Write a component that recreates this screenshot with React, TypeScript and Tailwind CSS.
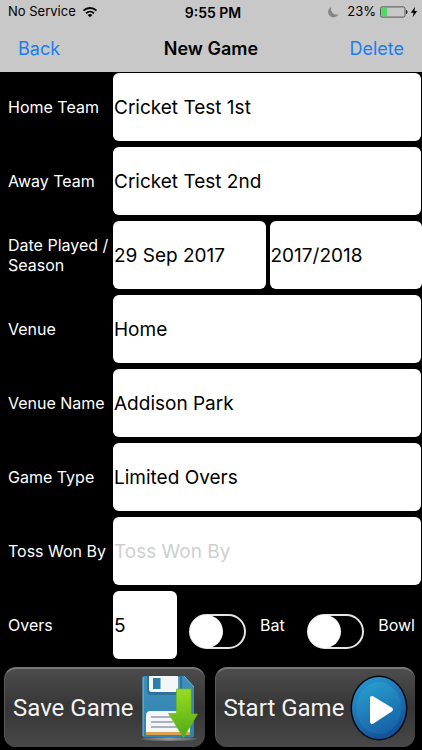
import { ReactNode, useState } from "react";

const inputClass =
  "h-[68px] w-full min-w-0 rounded-md bg-white pl-px text-[19px] text-black outline-none placeholder:text-[#cfcfcf]";

function StatusBar() {
  return (
    <div className="grid h-6 grid-cols-[1fr_auto_1fr] items-center pr-1 pl-2 text-[13px]">
      <div className="flex items-center gap-1.5">
        <span>No Service</span>
        <svg viewBox="0 0 16 12" className="h-3 w-4" fill="none" stroke="currentColor" strokeWidth="1.8">
          <path d="M1.5 4.6C5.2 1.1 10.8 1.1 14.5 4.6" />
          <path d="M4 7.3C6.3 5.1 9.7 5.1 12 7.3" />
          <path d="M8 11.3L5.6 8.9C7 7.7 9 7.7 10.4 8.9Z" fill="currentColor" stroke="none" />
        </svg>
      </div>
      <span className="text-[14px] font-semibold">9:55 PM</span>
      <div className="flex items-center justify-end">
        <svg viewBox="0 0 12 12" className="mr-2 h-3 w-3" fill="#858585">
          <path d="M4 1A5.500 5.500 0 1 0 11.500 8.300C7.500 9.500 3.300 6.200 4 1Z" />
        </svg>
        <span className="mr-1">23%</span>
        <svg viewBox="0 0 28 12" className="h-3 w-7">
          <rect x="0.5" y="0.9" width="24.5" height="10.2" rx="1.6" fill="none" stroke="#555" />
          <rect x="1.3" y="1.7" width="5.8" height="8.6" fill="#4cd964" />
          <path d="M26 4C28 4.4 28 7.6 26 8Z" fill="#222" />
        </svg>
        <svg viewBox="0 0 8 12" className="ml-0.5 h-3 w-2">
          <path d="M5.2 0.8L0.8 6.8H3.6L2.6 11.2L7.2 5H4.4Z" fill="#000" />
        </svg>
      </div>
    </div>
  );
}

function Row({ id, label, children }: { id: string; label: string; children: ReactNode }) {
  return (
    <div className="grid grid-cols-[105px_1fr] items-center">
      <label htmlFor={id} className="text-[16px] leading-5">
        {label}
      </label>
      {children}
    </div>
  );
}

function Toggle({ id, label }: { id: string; label: string }) {
  return (
    <div className="flex items-center gap-3.5">
      <input
        id={id}
        type="checkbox"
        className="mt-3 h-[35px] w-[57px] shrink-0 appearance-none rounded-full border-2 border-[#e5e5e5] before:-m-px before:block before:h-[33px] before:w-[33px] before:rounded-full before:bg-white checked:bg-[#4cd964] checked:before:ml-auto"
      />
      <label htmlFor={id} className="text-[16px] leading-5">
        {label}
      </label>
    </div>
  );
}

function SaveIcon() {
  return (
    <svg viewBox="0 0 58 66" className="h-[66px] w-[58px] shrink-0">
      <defs>
        <linearGradient id="disk" x1="0" y1="0" x2="0" y2="1">
          <stop offset="0" stopColor="#3d91bd" />
          <stop offset="1" stopColor="#3382ac" />
        </linearGradient>
        <linearGradient id="arrow" x1="0" y1="0" x2="0" y2="1">
          <stop offset="0" stopColor="#9bdc20" />
          <stop offset="1" stopColor="#4faa17" />
        </linearGradient>
        <linearGradient id="diskShadow" x1="0" y1="0" x2="1" y2="0">
          <stop offset="0" stopColor="#aaa" stopOpacity="0.2" />
          <stop offset="0.5" stopColor="#999" />
          <stop offset="1" stopColor="#aaa" stopOpacity="0.2" />
        </linearGradient>
      </defs>
      <ellipse cx="29" cy="64" rx="28" ry="1.7" fill="url(#diskShadow)" />
      <path d="M4.500 1H44L54 12V60Q54 62.500 51.500 62.500H4.500Q2.500 62.500 2.500 60V3Q2.500 1 4.500 1Z" fill="url(#disk)" />
      <path d="M3.200 61V2M44 1L54 12" fill="none" stroke="#6cb5d8" />
      <path d="M7 1H42V16Q42 20 38.500 20H10.500Q7 20 7 16Z" fill="#2e7299" />
      <path d="M9 1H38V14.500Q38 17 35.500 17H11.500Q9 17 9 14.500Z" fill="#f4f6f8" />
      <rect x="13" y="3" width="7.500" height="11" fill="#2e7eaa" />
      <path d="M39 2V16" stroke="#85bdd8" />
      <path d="M6 41Q6 36 10.500 36H45.500Q50 36 50 41V60H6Z" fill="#f5f6f8" />
      <rect x="6" y="57" width="44" height="3" fill="#d8a24e" />
      <path d="M11 42H32M11 47H33M11 52H38" stroke="#8d9eac" strokeWidth="1.300" />
      <path d="M36.500 14H51V39H57.500L43.500 62.500L28.500 38.500H36.500Z" fill="url(#arrow)" stroke="#69bd16" strokeWidth="0.700" strokeLinejoin="round" />
    </svg>
  );
}

function StartIcon() {
  return (
    <svg viewBox="0 0 58 66" className="h-[66px] w-[58px] shrink-0">
      <defs>
        <linearGradient id="ring" x1="0" y1="0" x2="0.5" y2="1">
          <stop offset="0" stopColor="#2b9bd5" />
          <stop offset="1" stopColor="#145398" />
        </linearGradient>
        <linearGradient id="disc" x1="0.3" y1="0" x2="0.7" y2="1">
          <stop offset="0" stopColor="#289dcd" />
          <stop offset="1" stopColor="#1560a5" />
        </linearGradient>
      </defs>
      <ellipse cx="29" cy="33" rx="28.500" ry="32.500" fill="#050a10" />
      <ellipse cx="29" cy="33" rx="27" ry="31" fill="url(#ring)" />
      <ellipse cx="29" cy="33" rx="22.500" ry="26" fill="url(#disc)" />
      <path d="M22 23L41 34.500L22 47Z" fill="#fff" stroke="#fff" strokeWidth="4" strokeLinejoin="round" />
    </svg>
  );
}

function ActionButton({ label, icon }: { label: string; icon: ReactNode }) {
  return (
    <button
      type="button"
      className="flex h-20 min-w-0 flex-1 items-center justify-between rounded-xl border-t-2 border-l border-t-[#777] border-l-[#5a5a5a] bg-linear-to-b from-[#4c4c4c] via-[#363636] to-[#484848] pr-[7px] pl-2 font-['Roboto',sans-serif] text-[24px] whitespace-nowrap text-[#f4f4f4]"
    >
      {label}
      {icon}
    </button>
  );
}

export default function App() {
  const [homeTeam, setHomeTeam] = useState("Cricket Test 1st");
  const [awayTeam, setAwayTeam] = useState("Cricket Test 2nd");
  const [date, setDate] = useState("29 Sep 2017");
  const [season, setSeason] = useState("2017/2018");
  const [venue, setVenue] = useState("Home");
  const [venueName, setVenueName] = useState("Addison Park");
  const [gameType, setGameType] = useState("Limited Overs");
  const [toss, setToss] = useState("");
  const [overs, setOvers] = useState("5");

  return (
    <div className="min-h-screen bg-black font-['Inter',sans-serif] text-white">
      <header className="border-b border-black bg-[#c8c8c8] text-black">
        <StatusBar />
        <nav className="grid h-12 grid-cols-[1fr_auto_1fr] items-center px-[18px] text-[18px]">
          <button type="button" className="justify-self-start text-[#1a7cf5]">
            Back
          </button>
          <h1 className="font-semibold">New Game</h1>
          <button type="button" className="justify-self-end text-[#1a7cf5]">
            Delete
          </button>
        </nav>
      </header>

      <form onSubmit={(e) => e.preventDefault()}>
        <div className="flex flex-col gap-1.5 pr-px pl-2">
          <Row id="home-team" label="Home Team">
            <input id="home-team" value={homeTeam} onChange={(e) => setHomeTeam(e.target.value)} className={inputClass} />
          </Row>
          <Row id="away-team" label="Away Team">
            <input id="away-team" value={awayTeam} onChange={(e) => setAwayTeam(e.target.value)} className={inputClass} />
          </Row>
          <Row id="date" label="Date Played / Season">
            <div className="-mr-px grid grid-cols-2 gap-1">
              <input id="date" value={date} onChange={(e) => setDate(e.target.value)} className={inputClass} />
              <input
                aria-label="Season"
                value={season}
                onChange={(e) => setSeason(e.target.value)}
                className={inputClass}
              />
            </div>
          </Row>
          <Row id="venue" label="Venue">
            <input id="venue" value={venue} onChange={(e) => setVenue(e.target.value)} className={inputClass} />
          </Row>
          <Row id="venue-name" label="Venue Name">
            <input id="venue-name" value={venueName} onChange={(e) => setVenueName(e.target.value)} className={inputClass} />
          </Row>
          <Row id="game-type" label="Game Type">
            <input id="game-type" value={gameType} onChange={(e) => setGameType(e.target.value)} className={inputClass} />
          </Row>
          <Row id="toss" label="Toss Won By">
            <input
              id="toss"
              placeholder="Toss Won By"
              value={toss}
              onChange={(e) => setToss(e.target.value)}
              className={inputClass}
            />
          </Row>
          <Row id="overs" label="Overs">
            <div className="flex items-center gap-3 pr-1.5">
              <div className="w-16">
                <input id="overs" value={overs} onChange={(e) => setOvers(e.target.value)} className={inputClass} />
              </div>
              <div className="flex flex-1 items-center justify-between">
                <Toggle id="bat" label="Bat" />
                <Toggle id="bowl" label="Bowl" />
              </div>
            </div>
          </Row>
        </div>

        <div className="flex gap-2.5 pt-2 pr-[7px] pb-0.5 pl-1">
          <ActionButton label="Save Game" icon={<SaveIcon />} />
          <ActionButton label="Start Game" icon={<StartIcon />} />
        </div>
      </form>
    </div>
  );
}
